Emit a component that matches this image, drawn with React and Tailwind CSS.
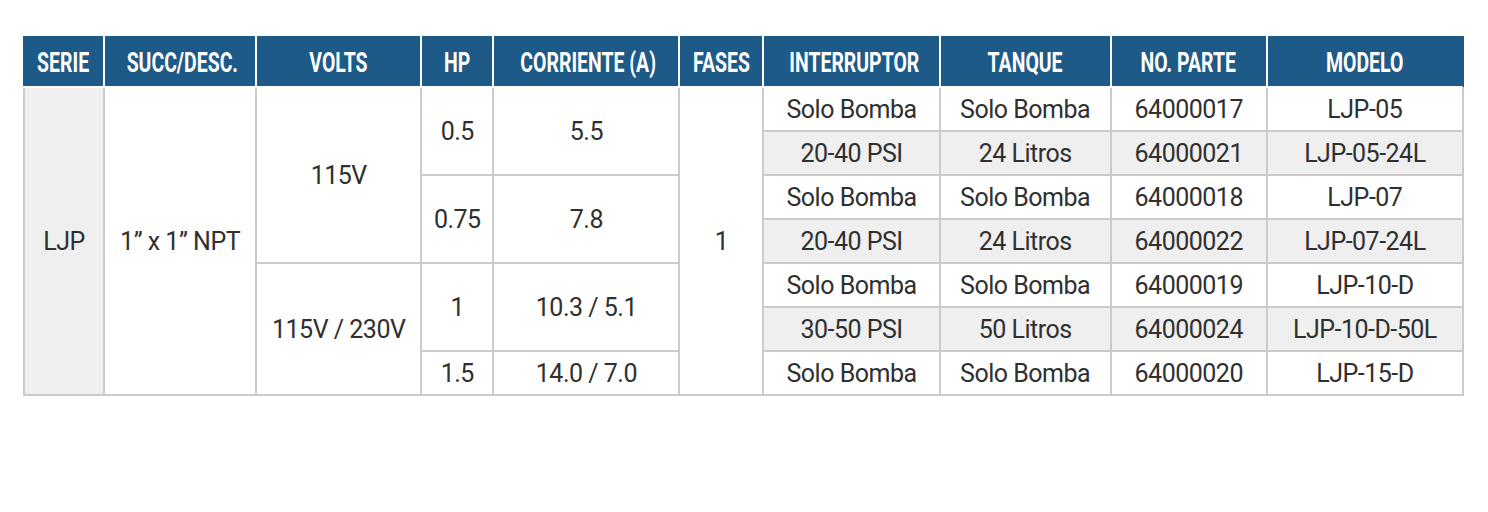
const headers = [
  'SERIE',
  'SUCC/DESC.',
  'VOLTS',
  'HP',
  'CORRIENTE (A)',
  'FASES',
  'INTERRUPTOR',
  'TANQUE',
  'NO. PARTE',
  'MODELO',
]

const widths = [82, 152, 165, 72, 186, 84, 176, 171, 156, 196]

const cell = 'border-r-2 border-b-2 border-[#cbcbcb] text-center align-middle p-0'

function Tail({ row, shaded }) {
  const bg = shaded ? 'bg-[#efefef]' : 'bg-white'
  return row.map((v, i) => (
    <td key={i} className={`${cell} ${bg}`}>
      {v}
    </td>
  ))
}

function App() {
  return (
    <div className="min-h-screen bg-white pt-[36px] pl-[23px]">
      <table className="border-separate border-spacing-0 table-fixed w-[1441px] text-[#303030] text-[25px] tracking-[-0.02em] leading-none font-['Roboto',sans-serif]">
        <colgroup>
          {widths.map((w, i) => (
            <col key={i} style={{ width: w }} />
          ))}
        </colgroup>
        <thead>
          <tr className="h-[52px]">
            {headers.map((h, i) => (
              <th
                key={h}
                className={`bg-[#1e5a87] text-white font-bold text-[27px] tracking-normal p-0 pt-[4px] border-b-2 border-b-white border-r-2 ${
                  i === headers.length - 1 ? 'border-r-[#1e5a87]' : 'border-r-white'
                }`}
              >
                <span className="inline-block scale-x-[0.72] whitespace-nowrap">{h}</span>
              </th>
            ))}
          </tr>
        </thead>
        <tbody>
          <tr className="h-[44px]">
            <td rowSpan={7} className={`${cell} border-l-2 bg-[#efefef]`}>LJP</td>
            <td rowSpan={7} className={cell}>1” x 1” NPT</td>
            <td rowSpan={4} className={cell}>115V</td>
            <td rowSpan={2} className={cell}>0.5</td>
            <td rowSpan={2} className={cell}>5.5</td>
            <td rowSpan={7} className={cell}>1</td>
            <Tail row={['Solo Bomba', 'Solo Bomba', '64000017', 'LJP-05']} />
          </tr>
          <tr className="h-[44px]">
            <Tail shaded row={['20-40 PSI', '24 Litros', '64000021', 'LJP-05-24L']} />
          </tr>
          <tr className="h-[44px]">
            <td rowSpan={2} className={cell}>0.75</td>
            <td rowSpan={2} className={cell}>7.8</td>
            <Tail row={['Solo Bomba', 'Solo Bomba', '64000018', 'LJP-07']} />
          </tr>
          <tr className="h-[44px]">
            <Tail shaded row={['20-40 PSI', '24 Litros', '64000022', 'LJP-07-24L']} />
          </tr>
          <tr className="h-[44px]">
            <td rowSpan={3} className={cell}>115V / 230V</td>
            <td rowSpan={2} className={cell}>1</td>
            <td rowSpan={2} className={cell}>10.3 / 5.1</td>
            <Tail row={['Solo Bomba', 'Solo Bomba', '64000019', 'LJP-10-D']} />
          </tr>
          <tr className="h-[44px]">
            <Tail shaded row={['30-50 PSI', '50 Litros', '64000024', 'LJP-10-D-50L']} />
          </tr>
          <tr className="h-[44px]">
            <td className={cell}>1.5</td>
            <td className={cell}>14.0 / 7.0</td>
            <Tail row={['Solo Bomba', 'Solo Bomba', '64000020', 'LJP-15-D']} />
          </tr>
        </tbody>
      </table>
    </div>
  )
}

export default App
